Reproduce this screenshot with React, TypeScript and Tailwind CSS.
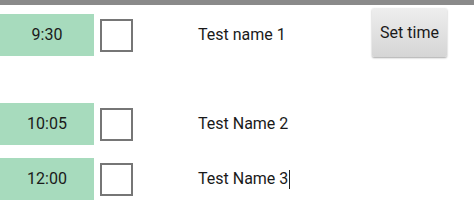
const rows = [
  { time: '9:30', name: 'Test name 1', button: true },
  { time: '10:05', name: 'Test Name 2' },
  { time: '12:00', name: 'Test Name 3', cursor: true },
]

function Row({ time, name, button, cursor }: { time: string; name: string; button?: boolean; cursor?: boolean }) {
  return (
    <div className="flex items-center h-[42px]">
      <div className="w-[94px] h-full bg-[#a7dbbd] flex items-center justify-center text-[16px] text-[#1a1a1a]">
        {time}
      </div>
      <div className="ml-[6px] w-[33px] h-[33px] border-2 border-[#767676] bg-white" />
      <div className="ml-[65px] flex-1 text-[16px] text-[#1a1a1a] flex items-center">
        {name}
        {cursor && <span className="w-[1px] h-[19px] bg-[#222] ml-[1px]" />}
      </div>
      {button && (
        <button className="self-start -mt-[6px] mr-[27px] w-[75px] h-[49px] rounded-[2px] bg-gradient-to-b from-[#eeeeee] to-[#d5d5d5] shadow-[0_1px_2px_rgba(0,0,0,0.35)] text-[16px] text-[#1a1a1a]">
          Set time
        </button>
      )}
    </div>
  )
}

export default function App() {
  return (
    <div className="w-[474px] h-[211px] bg-white overflow-hidden font-['Roboto',sans-serif]">
      <div className="h-[5px] bg-[#8a8a8a]" />
      <div className="mt-[9px]">
        <Row {...rows[0]} />
      </div>
      <div className="mt-[47px] flex flex-col gap-[13px]">
        <Row {...rows[1]} />
        <Row {...rows[2]} />
      </div>
    </div>
  )
}
